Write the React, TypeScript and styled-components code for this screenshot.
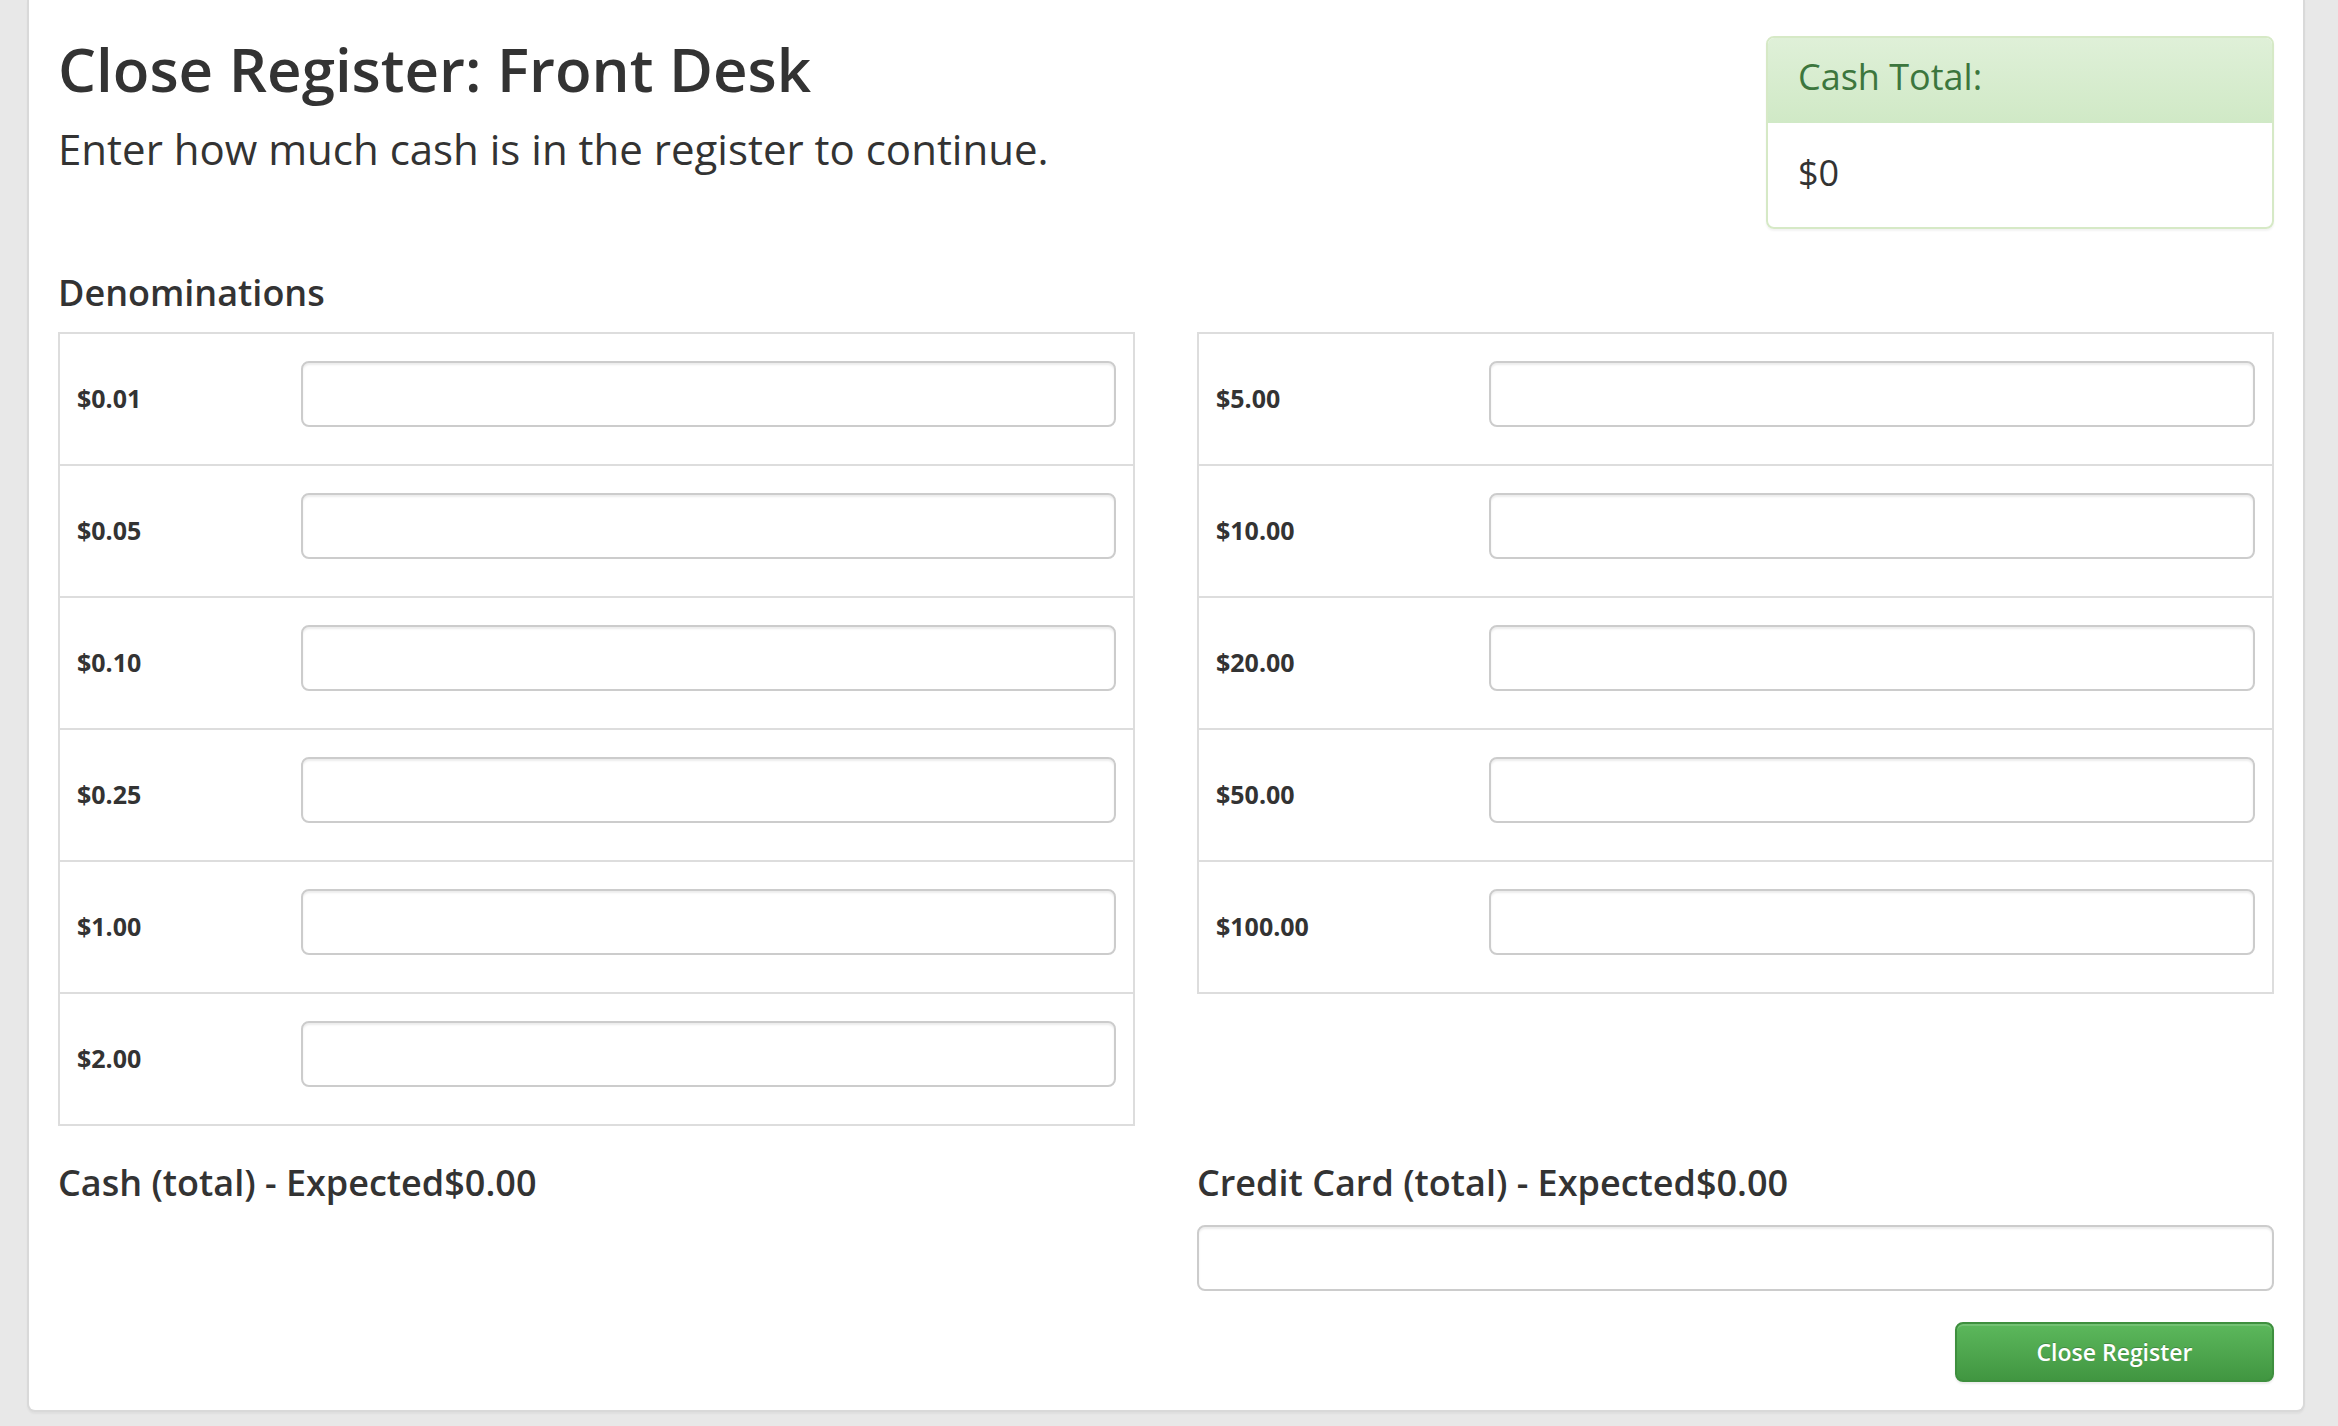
import React from 'react';
import styled, { createGlobalStyle } from 'styled-components';

// ============================================
// DATA
// ============================================

const LEFT_DENOMINATIONS = ['$0.01', '$0.05', '$0.10', '$0.25', '$1.00', '$2.00'];
const RIGHT_DENOMINATIONS = ['$5.00', '$10.00', '$20.00', '$50.00', '$100.00'];

// ============================================
// STYLED COMPONENTS
// ============================================

const GlobalStyle = createGlobalStyle`
  html, body {
    margin: 0;
    padding: 0;
    background: #e8e8e8;
  }

  body {
    font-family: 'Open Sans', 'Liberation Sans', sans-serif;
    color: #333;
  }

  * {
    box-sizing: border-box;
  }
`;

const Page = styled.div`
  padding: 0 33px 14px 27px;
`;

const Panel = styled.main`
  background: #fff;
  border: 2px solid #d9d9d9;
  border-top: none;
  border-radius: 0 0 8px 8px;
  box-shadow: 0 2px 2px rgba(0, 0, 0, 0.04);
  padding: 0 29px 28px;
`;

const HeaderRow = styled.header`
  display: flex;
  justify-content: space-between;
  align-items: flex-start;
`;

const TitleBlock = styled.div`
  padding-top: 36px;
`;

const Title = styled.h1`
  margin: 0;
  font-size: 60px;
  line-height: 66px;
  font-weight: 600;
  color: #333;
`;

const Subtitle = styled.p`
  margin: 19px 0 0;
  font-size: 42px;
  line-height: 56px;
  font-weight: 400;
  color: #333;
`;

const TotalCard = styled.aside`
  width: 508px;
  margin-top: 36px;
  border: 2px solid #d6e9c6;
  border-radius: 8px;
  overflow: hidden;
  box-shadow: 0 2px 2px rgba(0, 0, 0, 0.05);
`;

const TotalHeading = styled.div`
  padding: 18px 30px 26px;
  font-size: 36px;
  line-height: 41px;
  color: #3c763d;
  background: linear-gradient(to bottom, #dff0d8 0%, #d0e9c6 100%);
`;

const TotalBody = styled.div`
  padding: 29px 30px 34px;
  font-size: 36px;
  line-height: 41px;
  color: #333;
`;

const SectionTitle = styled.h3`
  margin: 44px 0 19px;
  font-size: 36px;
  line-height: 40px;
  font-weight: 600;
  color: #333;
`;

const Columns = styled.div`
  display: grid;
  grid-template-columns: 1fr 1fr;
  column-gap: 62px;
  align-items: start;
`;

const DenomTable = styled.div`
  border: 2px solid #ddd;
`;

const DenomRow = styled.div<{ $labelWidth: number }>`
  display: grid;
  grid-template-columns: ${({ $labelWidth }) => $labelWidth}px 1fr;
  align-items: center;
  height: 130px;
  padding: 0 17px;

  & + & {
    border-top: 2px solid #ddd;
    height: 132px;
  }
`;

const DenomLabel = styled.label`
  font-size: 25px;
  line-height: 34px;
  font-weight: 700;
  color: #333;
  margin-bottom: 2px;
`;

const TextInput = styled.input`
  display: block;
  width: 100%;
  height: 66px;
  padding: 12px 24px;
  font-family: inherit;
  font-size: 28px;
  color: #555;
  background: #fff;
  border: 2px solid #ccc;
  border-radius: 8px;
  box-shadow: inset 0 2px 2px rgba(0, 0, 0, 0.075);
  outline: none;
`;

const RowInput = styled(TextInput)`
  margin-bottom: 11px;
`;

const TotalsLabel = styled.h4`
  margin: 37px 0 0;
  font-size: 36px;
  line-height: 40px;
  font-weight: 600;
  color: #333;
`;

const CardInput = styled(TextInput)`
  margin-top: 22px;
`;

const Actions = styled.div`
  display: flex;
  justify-content: flex-end;
  margin-top: 31px;
`;

const PrimaryButton = styled.button`
  width: 319px;
  height: 60px;
  font-family: inherit;
  font-size: 23px;
  font-weight: 600;
  color: #fff;
  text-shadow: 0 -1px 0 rgba(0, 0, 0, 0.2);
  background: linear-gradient(to bottom, #5cb85c 0%, #419641 100%);
  border: 2px solid #3e8f3e;
  border-radius: 8px;
  box-shadow: inset 0 2px 0 rgba(255, 255, 255, 0.15), 0 2px 2px rgba(0, 0, 0, 0.075);
  cursor: pointer;
`;

// ============================================
// COMPONENT
// ============================================

const Denominations: React.FC<{ items: string[]; labelWidth: number }> = ({ items, labelWidth }) => (
  <DenomTable>
    {items.map((value) => (
      <DenomRow key={value} $labelWidth={labelWidth}>
        <DenomLabel>{value}</DenomLabel>
        <RowInput type="text" />
      </DenomRow>
    ))}
  </DenomTable>
);

export default function App() {
  return (
    <>
      <GlobalStyle />
      <Page>
        <Panel>
          <HeaderRow>
            <TitleBlock>
              <Title>Close Register: Front Desk</Title>
              <Subtitle>Enter how much cash is in the register to continue.</Subtitle>
            </TitleBlock>
            <TotalCard>
              <TotalHeading>Cash Total:</TotalHeading>
              <TotalBody>$0</TotalBody>
            </TotalCard>
          </HeaderRow>

          <SectionTitle>Denominations</SectionTitle>

          <Columns>
            <Denominations items={LEFT_DENOMINATIONS} labelWidth={224} />
            <Denominations items={RIGHT_DENOMINATIONS} labelWidth={273} />
          </Columns>

          <Columns>
            <div>
              <TotalsLabel>Cash (total) - Expected$0.00</TotalsLabel>
            </div>
            <div>
              <TotalsLabel>Credit Card (total) - Expected$0.00</TotalsLabel>
              <CardInput type="text" />
              <Actions>
                <PrimaryButton type="button">Close Register</PrimaryButton>
              </Actions>
            </div>
          </Columns>
        </Panel>
      </Page>
    </>
  );
}
